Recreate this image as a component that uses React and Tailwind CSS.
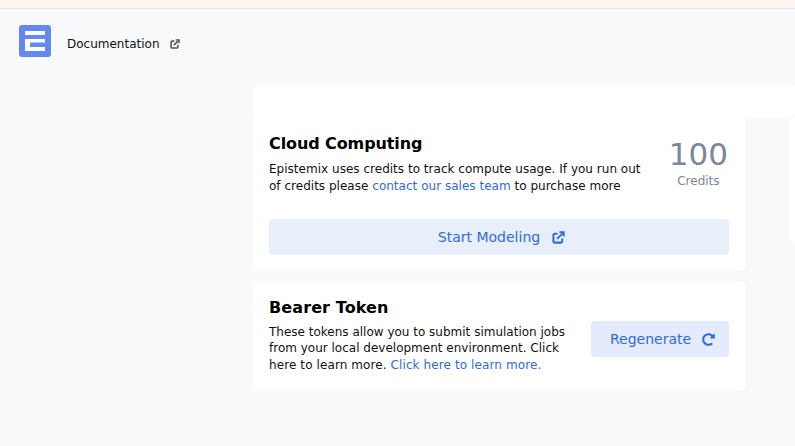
import { FaRedoAlt } from 'react-icons/fa'

function ExternalIcon({ className }) {
  return (
    <svg viewBox="0 0 14 14" fill="none" stroke="currentColor" strokeWidth="2.200" className={className}>
      <path d="M6 3H3a1.500 1.500 0 0 0-1.500 1.500V11A1.500 1.500 0 0 0 3 12.500h6.500A1.500 1.500 0 0 0 11 11V8" />
      <path d="M5.500 8.500L12 2" />
      <path d="M8 1.300h4.700V6" strokeWidth="1.800" />
    </svg>
  )
}

function Logo() {
  return (
    <svg viewBox="0 0 32 32" className="w-8 h-8 shrink-0">
      <rect width="32" height="32" rx="3" fill="#6488f0" />
      <path d="M6 6h20v4H6zM6 14h20v3.500H11v4.500h15v4H6z" fill="#fff" />
    </svg>
  )
}

export default function App() {
  return (
    <div className="h-[446px] overflow-hidden bg-[#f8f9fb] text-xs text-[#111] font-['DejaVu_Sans',sans-serif]">
      <div className="h-[9px] bg-[#fff5f5] border-b border-[#fbdcdc]" />

      <header className="flex items-center pl-[19px] pt-4">
        <Logo />
        <a className="ml-4 text-xs leading-8 translate-y-[3px]">Documentation</a>
        <ExternalIcon className="ml-[10px] w-[10px] h-[10px] text-[#555] translate-y-[3px]" />
      </header>

      <main className="ml-[253px] mt-7">
        <div className="h-8 bg-white rounded" />
        <div className="flex">
          <div className="w-[492px] flex flex-col gap-[10px]">
            <section className="h-[154px] bg-white rounded px-4 pt-[17px]">
              <div className="flex justify-between">
                <div className="w-[385px]">
                  <h2 className="text-base font-bold text-black leading-5 tracking-[-0.1px]">Cloud Computing</h2>
                  <p className="mt-[7px] leading-[17px] tracking-[0.02px]">
                    Epistemix uses credits to track compute usage. If you run out of credits please{' '}
                    <a className="text-[#2f6bdc]">contact our sales team</a> to purchase more
                  </p>
                </div>
                <div className="text-center text-[#7a8699] pt-px pr-px">
                  <div className="text-[31px] leading-[38px]">100</div>
                  <div className="text-xs leading-[14px] mt-px">Credits</div>
                </div>
              </div>
              <button className="mt-6 w-full h-9 flex items-center justify-center gap-3 pl-[5px] rounded bg-[#e8eefa] text-sm text-[#2f6bdc]">
                Start Modeling
                <ExternalIcon className="w-[13px] h-[13px]" />
              </button>
            </section>

            <section className="h-[110px] bg-white rounded flex items-center justify-between px-4">
              <div className="w-[300px] -mt-px">
                <h2 className="text-base font-bold text-black leading-5 tracking-[0.1px]">Bearer Token</h2>
                <p className="mt-[6px] leading-[16.500px]">
                  These tokens allow you to submit simulation jobs from your local development environment. Click{' '}
                  <span className="tracking-[0.1px]">here to learn more.</span>{' '}
                  <a className="text-[#2f6bdc] tracking-[0.1px]">Click here to learn more.</a>
                </p>
              </div>
              <button className="w-[138px] h-9 mt-[6px] flex items-center justify-start gap-[11px] pl-[19px] rounded bg-[#e4ebfc] text-sm text-[#2f6bdc]">
                Regenerate
                <FaRedoAlt className="w-[13px] h-[13px]" />
              </button>
            </section>
          </div>
          <div className="ml-11 flex-1 h-[126px] bg-white rounded-l" />
        </div>
      </main>
    </div>
  )
}
